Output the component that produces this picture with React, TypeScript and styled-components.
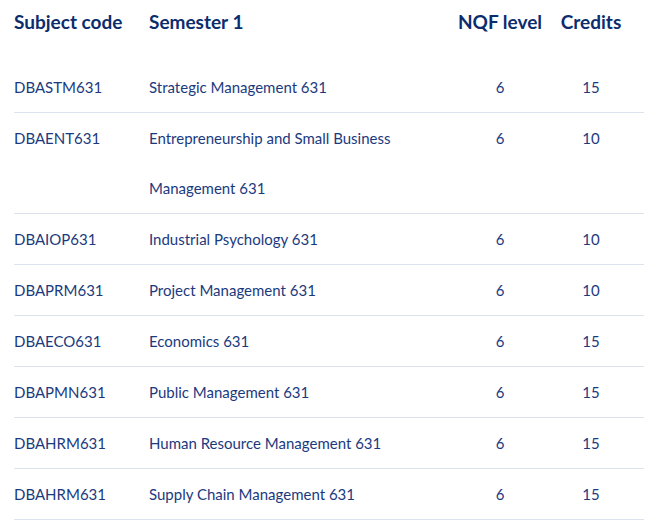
import React from "react";
import styled, { createGlobalStyle } from "styled-components";

const Global = createGlobalStyle`
  html, body { margin: 0; padding: 0; background: #ffffff; }
  body { font-family: Lato, "Noto Sans", sans-serif; }
`;

const Page = styled.div`
  padding: 0 15px 0 14px;
  width: 630px;
`;

const Row = styled.div<{ $head?: boolean }>`
  display: grid;
  grid-template-columns: 135px 301px 100px 82px 12px;
  border-bottom: ${(p) => (p.$head ? "none" : "1px solid #dbe4ee")};
  ${(p) => (p.$head ? "height: 62px; align-items: start;" : "")}
`;

const HeadCell = styled.div<{ $center?: boolean }>`
  font-size: 19px;
  font-weight: 700;
  color: #0c2d6d;
  line-height: 44px;
  text-align: ${(p) => (p.$center ? "center" : "left")};
  white-space: nowrap;
`;

const Cell = styled.div<{ $center?: boolean }>`
  font-size: 15px;
  font-weight: 400;
  color: #1b3a7e;
  line-height: 50px;
  text-align: ${(p) => (p.$center ? "center" : "left")};
`;

const rows = [
  ["DBASTM631", "Strategic Management 631", "6", "15"],
  ["DBAENT631", "Entrepreneurship and Small Business Management 631", "6", "10"],
  ["DBAIOP631", "Industrial Psychology 631", "6", "10"],
  ["DBAPRM631", "Project Management 631", "6", "10"],
  ["DBAECO631", "Economics 631", "6", "15"],
  ["DBAPMN631", "Public Management 631", "6", "15"],
  ["DBAHRM631", "Human Resource Management 631", "6", "15"],
  ["DBAHRM631", "Supply Chain Management 631", "6", "15"],
];

export default function App() {
  return (
    <>
      <Global />
      <Page>
        <Row $head>
          <HeadCell>Subject code</HeadCell>
          <HeadCell>Semester 1</HeadCell>
          <HeadCell $center>NQF level</HeadCell>
          <HeadCell $center>Credits</HeadCell>
          <div />
        </Row>
        {rows.map((r, i) => (
          <Row key={i}>
            <Cell>{r[0]}</Cell>
            <Cell>{r[1]}</Cell>
            <Cell $center>{r[2]}</Cell>
            <Cell $center>{r[3]}</Cell>
            <div />
          </Row>
        ))}
      </Page>
    </>
  );
}
